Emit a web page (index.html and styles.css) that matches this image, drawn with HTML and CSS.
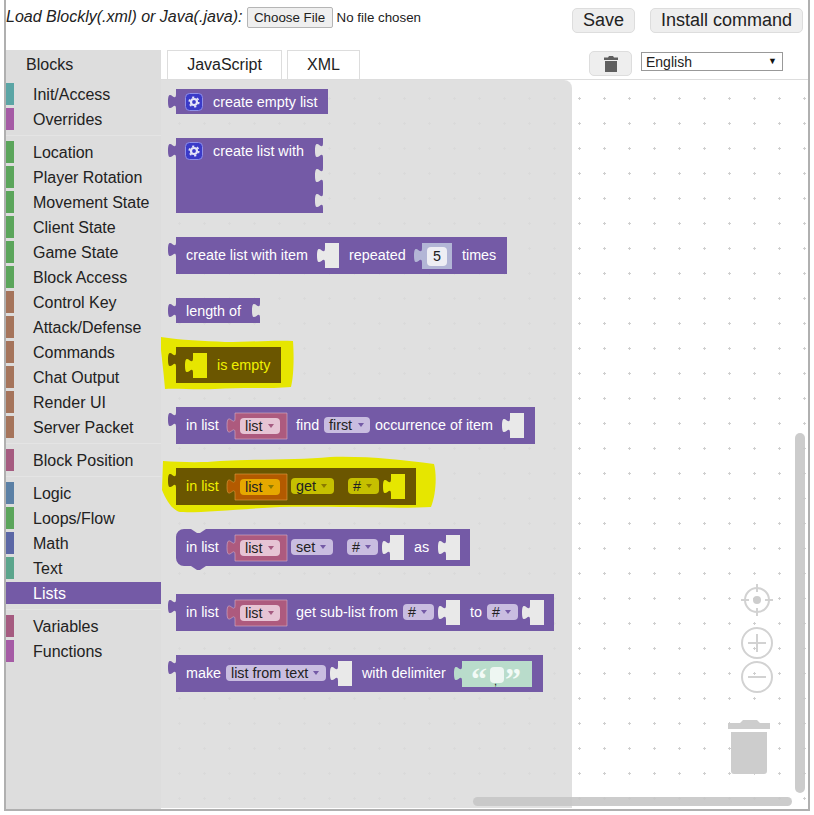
FILE: index.html
```
<!DOCTYPE html>
<html lang="en">
<head>
<meta charset="utf-8">
<title>Blockly command editor</title>
<link rel="stylesheet" href="styles.css">
</head>
<body>
<div class="frame">
  <header class="top">
    <span class="load-label">Load Blockly(.xml) or Java(.java):</span>
    <input class="file" type="file">
    <div class="actions">
      <button class="btn" type="button">Save</button>
      <button class="btn" type="button">Install command</button>
    </div>
  </header>
  <div class="main">
    <nav class="toolbox">
      <div class="tb-title">Blocks</div>
      <div class="tb-row"><i class="sw teal"></i>Init/Access</div>
      <div class="tb-row"><i class="sw violet"></i>Overrides</div>
      <div class="tb-sep"></div>
      <div class="tb-row"><i class="sw green"></i>Location</div>
      <div class="tb-row"><i class="sw green"></i>Player Rotation</div>
      <div class="tb-row"><i class="sw green"></i>Movement State</div>
      <div class="tb-row"><i class="sw green"></i>Client State</div>
      <div class="tb-row"><i class="sw green"></i>Game State</div>
      <div class="tb-row"><i class="sw green"></i>Block Access</div>
      <div class="tb-row"><i class="sw brown"></i>Control Key</div>
      <div class="tb-row"><i class="sw brown"></i>Attack/Defense</div>
      <div class="tb-row"><i class="sw brown"></i>Commands</div>
      <div class="tb-row"><i class="sw brown"></i>Chat Output</div>
      <div class="tb-row"><i class="sw brown"></i>Render UI</div>
      <div class="tb-row"><i class="sw brown"></i>Server Packet</div>
      <div class="tb-sep"></div>
      <div class="tb-row"><i class="sw rose"></i>Block Position</div>
      <div class="tb-sep"></div>
      <div class="tb-row"><i class="sw blue"></i>Logic</div>
      <div class="tb-row"><i class="sw green"></i>Loops/Flow</div>
      <div class="tb-row"><i class="sw indigo"></i>Math</div>
      <div class="tb-row"><i class="sw sea"></i>Text</div>
      <div class="tb-row selected"><i class="sw"></i>Lists</div>
      <div class="tb-sep"></div>
      <div class="tb-row"><i class="sw rose"></i>Variables</div>
      <div class="tb-row"><i class="sw violet"></i>Functions</div>
    </nav>
    <div class="editor">
      <div class="tabs">
        <div class="tab tab-js">JavaScript</div>
        <div class="tab tab-xml">XML</div>
        <button class="trash-btn" type="button" aria-label="Discard">
          <svg width="14" height="16" viewBox="0 0 14 16"><path class="ic" d="M5 0h4l1 1.500h4V4H0V1.500h4zM1 5h12v11H1z"/></svg>
        </button>
        <div class="lang-wrap"><select class="lang"><option>English</option></select></div>
      </div>
      <div class="workspace">
<svg class="canvas" width="647" height="728" viewBox="161 80 647 728">
  <defs>
    <pattern id="dots" patternUnits="userSpaceOnUse" x="578" y="97" width="25" height="25">
      <rect class="dot" x="0" y="1" width="3" height="1"/>
      <rect class="dot" x="1" y="0" width="1" height="3"/>
    </pattern>
    <path id="hole" d="M8,0H22V25H8V20c0,-10 -8,8 -8,-7.500s8,2.500 8,-7.500z"/>
    <g id="gear">
      <rect class="gear-box" x="0.500" y="0.500" width="17" height="17" rx="4"/>
      <circle class="gear-ring" cx="9" cy="9" r="3"/>
      <circle class="gear-teeth" cx="9" cy="9" r="4.800"/>
    </g>
    <path id="arrow" d="M0,0H6L3,4z"/>
  </defs>
  <rect class="bg" x="161" y="80" width="647" height="728"/>
  <rect x="161" y="80" width="647" height="728" fill="url(#dots)"/>
  <path class="flyout" d="M161,80H564a8,8 0 0 1 8,8V808H161z"/>

  <!-- create empty list -->
  <path class="b" d="M176,89H328V114H176V109c0,-10 -8,8 -8,-7.500s8,2.500 8,-7.500z"/>
  <use href="#gear" x="185" y="93"/>
  <text class="t" x="213" y="106.500">create empty list</text>

  <!-- create list with -->
  <path class="b" d="M176,138H323v5c0,10 -8,-8 -8,7.500s8,-2.500 8,7.500v10c0,10 -8,-8 -8,7.500s8,-2.500 8,7.500v10c0,10 -8,-8 -8,7.500s8,-2.500 8,7.500v5H176V158c0,-10 -8,8 -8,-7.500s8,2.500 8,-7.500z"/>
  <use href="#gear" x="185" y="142"/>
  <text class="t" x="213" y="155.500">create list with</text>

  <!-- create list with item -->
  <path class="b" d="M176,237H507V274H176V257c0,-10 -8,8 -8,-7.500s8,2.500 8,-7.500z"/>
  <text class="t" x="186" y="260">create list with item</text>
  <use class="h" href="#hole" x="317" y="243"/>
  <text class="t" x="349" y="260">repeated</text>
  <path class="s-num" d="M422,243H452V269H422V263c0,-10 -8,8 -8,-7.500s8,2.500 8,-7.500z"/>
  <rect class="f-num" x="427" y="247" width="20" height="19" rx="4"/>
  <text class="d" x="437" y="261" text-anchor="middle">5</text>
  <text class="t" x="462" y="260">times</text>

  <!-- length of -->
  <path class="b" d="M176,298H260v5c0,10 -8,-8 -8,7.500s8,-2.500 8,7.500v5H176V318c0,-10 -8,8 -8,-7.500s8,2.500 8,-7.500z"/>
  <text class="t" x="186" y="316">length of</text>

  <!-- is empty (highlighted) -->
  <path class="mark" d="M161,337C180,340 205,341 225,342C250,342 275,340 293,341C294,355 294,375 291,387C270,389 240,387 215,389C195,390 175,388 165,389C164,375 162,360 161,350z"/>
  <path class="bh" d="M176,347H281V383H176V367c0,-10 -8,8 -8,-7.500s8,2.500 8,-7.500z"/>
  <use class="hy" href="#hole" x="185" y="353"/>
  <text class="ty" x="217" y="370">is empty</text>

  <!-- in list find -->
  <path class="b" d="M176,407H535V444H176V427c0,-10 -8,8 -8,-7.500s8,2.500 8,-7.500z"/>
  <text class="t" x="186" y="430">in list</text>
  <path class="s-var" d="M235,413H287V439H235V433c0,-10 -8,8 -8,-7.500s8,2.500 8,-7.500z"/>
  <rect class="f-var" x="240" y="418" width="40" height="16" rx="4"/>
  <text class="d" x="245" y="431">list</text>
  <use class="a-var" href="#arrow" x="268" y="424"/>
  <text class="t" x="296" y="430">find</text>
  <rect class="f-drop" x="324" y="417" width="46" height="16" rx="4"/>
  <text class="d" x="329" y="430">first</text>
  <use class="a-drop" href="#arrow" x="358" y="423"/>
  <text class="t" x="375" y="430">occurrence of item</text>
  <use class="h" href="#hole" x="502" y="413"/>

  <!-- in list get (highlighted) -->
  <path class="mark" d="M163,461C180,462 200,463 220,461C260,459 300,460 330,457C370,456 400,460 434,464C437,475 436,495 431,507C400,509 330,506 280,507C240,509 200,513 180,512C172,510 166,500 162,490z"/>
  <path class="bh" d="M176,468H416V505H176V488c0,-10 -8,8 -8,-7.500s8,2.500 8,-7.500z"/>
  <text class="ty" x="186" y="491">in list</text>
  <path class="s-varh" d="M235,474H287V500H235V494c0,-10 -8,8 -8,-7.500s8,2.500 8,-7.500z"/>
  <rect class="f-varh" x="240" y="479" width="40" height="16" rx="4"/>
  <text class="d" x="245" y="492">list</text>
  <use class="a-h" href="#arrow" x="268" y="485"/>
  <rect class="f-droph" x="291" y="478" width="43" height="16" rx="4"/>
  <text class="d" x="296" y="491">get</text>
  <use class="a-h" href="#arrow" x="321" y="484"/>
  <rect class="f-droph" x="348" y="478" width="31" height="16" rx="4"/>
  <text class="d" x="353" y="491">#</text>
  <use class="a-h" href="#arrow" x="366" y="484"/>
  <use class="hy" href="#hole" x="383" y="474"/>

  <!-- in list set -->
  <path class="b" d="M176,537a8,8 0 0 1 8,-8H191l6,4 3,0 6,-4H470V566H206l-6,4 -3,0 -6,-4H184a8,8 0 0 1 -8,-8z"/>
  <text class="t" x="186" y="552">in list</text>
  <path class="s-var" d="M235,535H287V561H235V555c0,-10 -8,8 -8,-7.500s8,2.500 8,-7.500z"/>
  <rect class="f-var" x="240" y="540" width="40" height="16" rx="4"/>
  <text class="d" x="245" y="553">list</text>
  <use class="a-var" href="#arrow" x="268" y="546"/>
  <rect class="f-drop" x="291" y="539" width="42" height="16" rx="4"/>
  <text class="d" x="296" y="552">set</text>
  <use class="a-drop" href="#arrow" x="320" y="545"/>
  <rect class="f-drop" x="347" y="539" width="31" height="16" rx="4"/>
  <text class="d" x="352" y="552">#</text>
  <use class="a-drop" href="#arrow" x="365" y="545"/>
  <use class="h" href="#hole" x="382" y="535"/>
  <text class="t" x="414" y="552">as</text>
  <use class="h" href="#hole" x="438" y="535"/>

  <!-- in list get sub-list -->
  <path class="b" d="M176,594H554V631H176V614c0,-10 -8,8 -8,-7.500s8,2.500 8,-7.500z"/>
  <text class="t" x="186" y="617">in list</text>
  <path class="s-var" d="M235,600H287V626H235V620c0,-10 -8,8 -8,-7.500s8,2.500 8,-7.500z"/>
  <rect class="f-var" x="240" y="605" width="40" height="16" rx="4"/>
  <text class="d" x="245" y="618">list</text>
  <use class="a-var" href="#arrow" x="268" y="611"/>
  <text class="t" x="296" y="617">get sub-list from</text>
  <rect class="f-drop" x="403" y="604" width="31" height="16" rx="4"/>
  <text class="d" x="408" y="617">#</text>
  <use class="a-drop" href="#arrow" x="421" y="610"/>
  <use class="h" href="#hole" x="438" y="600"/>
  <text class="t" x="470" y="617">to</text>
  <rect class="f-drop" x="487" y="604" width="31" height="16" rx="4"/>
  <text class="d" x="492" y="617">#</text>
  <use class="a-drop" href="#arrow" x="505" y="610"/>
  <use class="h" href="#hole" x="522" y="600"/>

  <!-- make list from text -->
  <path class="b" d="M176,655H543V692H176V675c0,-10 -8,8 -8,-7.500s8,2.500 8,-7.500z"/>
  <text class="t" x="186" y="678">make</text>
  <rect class="f-drop" x="226" y="665" width="100" height="16" rx="4"/>
  <text class="d" x="231" y="678">list from text</text>
  <use class="a-drop" href="#arrow" x="313" y="671"/>
  <use class="h" href="#hole" x="330" y="661"/>
  <text class="t" x="362" y="678">with delimiter</text>
  <path class="s-str" d="M462,661H532V687H462V681c0,-10 -8,8 -8,-7.500s8,2.500 8,-7.500z"/>
  <text class="q" x="471" y="690">“</text>
  <rect class="f-str" x="490" y="667" width="14" height="16" rx="4"/>
  <text class="d-small" x="494" y="685">,</text>
  <text class="q" x="505" y="690">”</text>

  <!-- scrollbars -->
  <rect class="sb" x="795" y="433" width="10" height="360" rx="5"/>
  <rect class="sb" x="473" y="797" width="319" height="9" rx="4.500"/>

  <!-- zoom controls -->
  <g class="ctl">
    <circle cx="757" cy="600" r="12"/>
    <path d="M757,584V592M757,608V616M741,600H749M765,600H773"/>
    <circle cx="757" cy="643" r="15"/>
    <path d="M757,634V652M748,643H766"/>
    <circle cx="757" cy="677" r="15"/>
    <path d="M748,677H766"/>
  </g>
  <circle class="ctl-fill" cx="757" cy="600" r="4"/>
  <path class="ctl-fill" d="M728,723H740L743,720H757L760,723H770V729H728zM731,732H767V771a3,3 0 0 1 -3,3H734a3,3 0 0 1 -3,-3z"/>
</svg>
      </div>
    </div>
  </div>
</div>
</body>
</html>
```
FILE: styles.css
```
html, body {
  margin: 0;
  padding: 0;
  height: 815px;
  overflow: hidden;
  background: #fff;
  font-family: "Liberation Sans", Arial, sans-serif;
  color: #222;
}

.frame {
  box-sizing: border-box;
  width: 806px;
  height: 811px;
  margin-left: 4px;
  border-left: 2px solid #b0b0b0;
  border-right: 2px solid #b0b0b0;
  border-bottom: 2px solid #b0b0b0;
  display: flex;
  flex-direction: column;
}

.top {
  height: 50px;
  flex: none;
  display: flex;
  align-items: flex-start;
  padding-right: 5px;
}

.load-label {
  font-style: italic;
  font-size: 16px;
  line-height: 34px;
  margin-right: 4px;
}

.file {
  margin-top: 7px;
  font: 13.33px "Liberation Sans", Arial, sans-serif;
  color: #222;
}

.file::file-selector-button {
  box-sizing: border-box;
  width: 86px;
  height: 21px;
  margin-right: 4px;
  padding: 0;
  font: 13.33px "Liberation Sans", Arial, sans-serif;
  color: #222;
  background: #efefef;
  border: 1px solid #b5b5b5;
  border-radius: 2px;
}

.actions {
  margin-left: auto;
  margin-top: 8px;
  display: flex;
  gap: 15px;
}

.btn {
  height: 25px;
  padding: 0 10px;
  font: 18px "Liberation Sans", Arial, sans-serif;
  color: #222;
  background: #eee;
  border: 1px solid #ddd;
  border-radius: 5px;
}

.main {
  flex: 1;
  display: flex;
  min-height: 0;
}

.toolbox {
  width: 155px;
  flex: none;
  background: #ddd;
  font-size: 16px;
}

.tb-title {
  height: 29px;
  line-height: 30px;
  padding-left: 20px;
  margin-bottom: 4px;
}

.tb-row {
  height: 22px;
  line-height: 24px;
  margin-bottom: 3px;
  display: flex;
}

.sw {
  width: 8px;
  margin-right: 19px;
  flex: none;
}

.tb-sep {
  height: 1px;
  margin: 5px 0;
  background: #e4e4e4;
}

.teal { background: #5ba5a5; }
.violet { background: #a55ba5; }
.green { background: #5ba55b; }
.brown { background: #a5745b; }
.rose { background: #a55b80; }
.blue { background: #5b80a5; }
.indigo { background: #5b67a5; }
.sea { background: #5ba58c; }

.selected {
  background: #745aa6;
  color: #fff;
}

.editor {
  flex: 1;
  min-width: 0;
  display: flex;
  flex-direction: column;
}

.tabs {
  height: 29px;
  flex: none;
  display: flex;
  align-items: flex-start;
  padding: 0 25px 0 6px;
}

.tab {
  box-sizing: border-box;
  height: 29px;
  line-height: 28px;
  text-align: center;
  font-size: 16px;
  border: 1px solid #ddd;
  border-bottom: 0;
}

.tab-js { width: 115px; margin-right: 5px; }
.tab-xml { width: 73px; }

.trash-btn {
  width: 43px;
  height: 25px;
  margin: 1px 9px 0 auto;
  padding: 0;
  background: #eee;
  border: 1px solid #ddd;
  border-radius: 5px;
  display: flex;
  align-items: center;
  justify-content: center;
}

.ic { fill: #5f5f5f; }

.lang-wrap {
  position: relative;
  margin-top: 2px;
}

.lang-wrap::after {
  content: "\25BC";
  position: absolute;
  right: 6px;
  top: 4px;
  font-size: 9px;
  line-height: 10px;
  color: #111;
  pointer-events: none;
}

.lang {
  display: block;
  appearance: none;
  width: 142px;
  height: 19px;
  padding: 0 0 0 4px;
  font: 14px "Liberation Sans", Arial, sans-serif;
  color: #222;
  background: #fff;
  border: 1px solid #999;
  border-radius: 0;
}

.workspace {
  flex: 1;
  min-height: 0;
  border-top: 1px solid #ddd;
}

.canvas {
  display: block;
  font-family: "Liberation Sans", Arial, sans-serif;
  font-size: 14.35px;
}

.bg { fill: #fff; }
.dot { fill: #cfcfcf; }
.flyout { fill: #dcdcdc; fill-opacity: 0.88; }

.b { fill: #745aa6; }
.bh { fill: #6b5600; }
.mark { fill: #e6e600; }
.h { fill: #e9e9e9; }
.hy { fill: #e6e600; }

.t { fill: #fff; }
.ty { fill: #f0f000; }
.d { fill: #222; }
.d-small { fill: #222; font-size: 11px; }
.q { fill: #f2faf6; font-family: "Liberation Serif", serif; font-weight: 700; font-size: 32px; }

.gear-box { fill: #3a3ac8; stroke: #8f8fe8; stroke-width: 1; }
.gear-ring { fill: none; stroke: #e4e4f8; stroke-width: 2.200; }
.gear-teeth { fill: none; stroke: #e4e4f8; stroke-width: 1.600; stroke-dasharray: 2.200 2.830; }

.s-var { fill: #ad5a7e; stroke: #d9b4c6; stroke-width: 0.600; }
.f-var { fill: #e6c4d4; }
.a-var { fill: #a55b80; }
.s-varh { fill: #b35a00; stroke: #e0a040; stroke-width: 0.600; }
.f-varh { fill: #e6a800; }
.f-droph { fill: #c6c000; }
.a-h { fill: #8a7a00; }
.f-drop { fill: #c9bde0; }
.a-drop { fill: #745aa6; }
.s-num { fill: #b3b6d6; }
.f-num { fill: #eeeef4; }
.s-str { fill: #b9dccb; }
.f-str { fill: #eef6f2; }

.sb { fill: #c6c6c6; fill-opacity: 0.9; }
.ctl { fill: none; stroke: #d2d2d2; stroke-width: 2; }
.ctl-fill { fill: #cdcdcd; }
```
